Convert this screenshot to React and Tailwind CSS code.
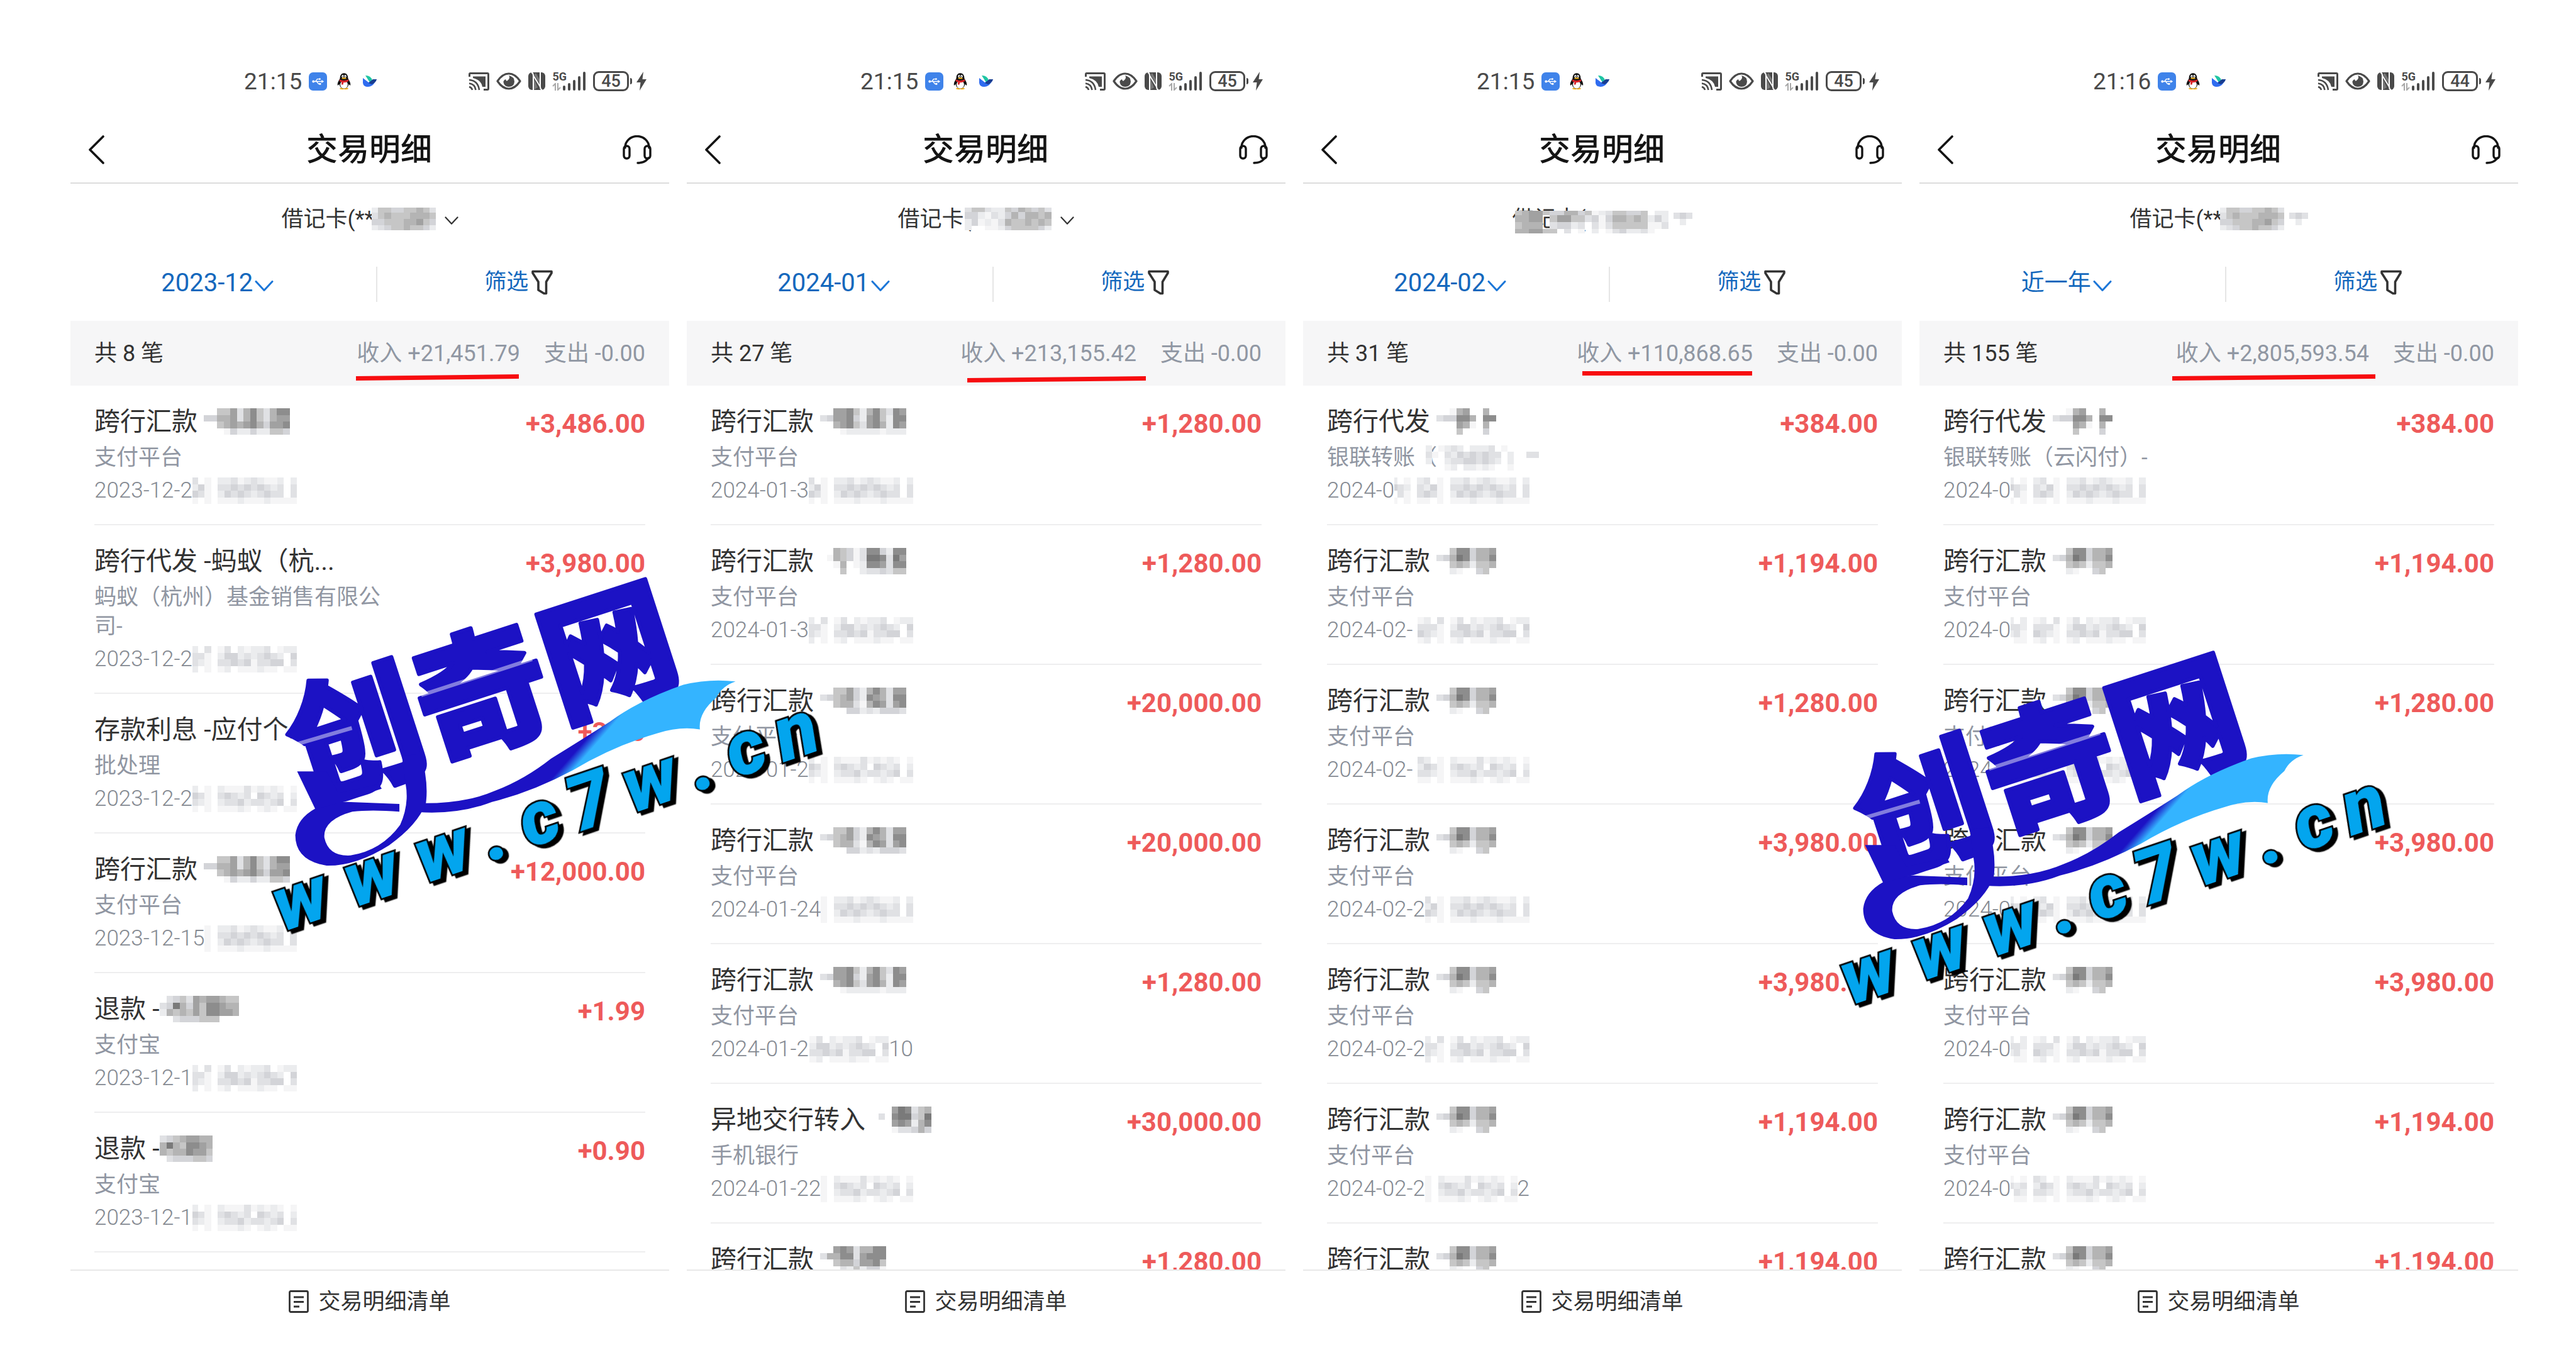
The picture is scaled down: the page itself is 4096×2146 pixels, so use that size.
const SHADES = {
  1: '#f5f5f6',
  2: '#ebecee',
  3: '#e0e1e4',
  4: '#d3d4d8',
  5: '#c6c6c6',
  6: '#b4b4b4',
  7: '#a1a1a1',
  8: '#8d8d8d',
  9: '#7a7a7a',
};

// Each string is one row of mosaic cells, "." is an empty cell
const NAMES = {
  long: ['..55736853688', '4466736853677', '..56767864778', '...1422422554'],
  dense: ['..77852685387', '3477842785288', '..67853786287', '...1222221222'],
  wide: ['..65413884288', '.165413998397', '..16.12887388', '...5..2334355'],
  mid: ['..55742686377', '3456742876388', '..56631687378', '....442324443'],
  short: ['..78736688', '3668837888', '..56647785', '...3252441'],
  pair: ['..5884667', '346984668', '..5652556', '..21..45.'],
  cross: ['..167..6.', '344886.88', '...761.6.', '...5...4.'],
  refund: ['.34537677655', '349647588766', '265657588776', '..3444555...'],
  refundShort: ['34567766', '69658876', '65668775', '.3444554'],
  transfer: ['...798356', '.3.899459', '...787268', '...133464'],
};

const TIMES = [
  ['22.1.23.1.2231232112.2', '3432.3241.3343434323.3', '2.31.3431.2434323433.3', '11.1.11.1.111211121111'],
  ['12.2.12.3.13.21223.122', '2332.3331.2442323432.4', '3231.4321.3343413344.3', '1.11.12.1.12.111211.11'],
  ['11.1.32.1.2111312121.1', '2323.2431.34323.4323.2', '3.32.3321.2334233234.3', '1.11.11.1.11121.121.11'],
];

const CARD = {
  short: ['2554455653', '3565556665', '4455566754', '2345565542'],
  medium: ['3553225465453', '4421324646656', '2412136556565', '2..1124555542'],
  full: ['5677544664512355445.22', '6677.57755341466565242', '5666.34423.31355555113', '667755.3.1.2.1342231..'],
};

const pay = (name, amount, date, tail) => ({ title: '跨行汇款', name, sub: '支付平台', amount, date, tail });

const unionPay = (extra) => ({ title: '跨行代发', name: 'cross', amount: '384.00', date: '2024-0', ...extra });

// Row that only shows its first line above the footer
const peek = (name, amount) => ({ title: '跨行汇款', name, amount });

const SCREENS = [
  {
    time: '21:15',
    battery: 45,
    card: '借记卡(**',
    cardMask: 'short',
    chevron: true,
    range: '2023-12',
    count: 8,
    income: '21,451.79',
    mark: 'right-[239px] bottom-[8px] w-[259px]',
    rows: [
      pay('long', '3,486.00', '2023-12-2'),
      { title: '跨行代发 -蚂蚁（杭...', sub: '蚂蚁（杭州）基金销售有限公司-', amount: '3,980.00', date: '2023-12-2' },
      { title: '存款利息 -应付个...', sub: '批处理', amount: '3.00', date: '2023-12-2' },
      pay('long', '12,000.00', '2023-12-15'),
      { title: '退款 -', name: 'refund', sub: '支付宝', amount: '1.99', date: '2023-12-1' },
      { title: '退款 -', name: 'refundShort', sub: '支付宝', amount: '0.90', date: '2023-12-1' },
    ],
  },
  {
    time: '21:15',
    battery: 45,
    card: '借记卡(',
    cardMask: 'medium',
    chevron: true,
    range: '2024-01',
    count: 27,
    income: '213,155.42',
    mark: 'right-[222px] bottom-[5px] w-[284px]',
    rows: [
      pay('dense', '1,280.00', '2024-01-3'),
      pay('wide', '1,280.00', '2024-01-3'),
      pay('mid', '20,000.00', '2024-01-2'),
      pay('mid', '20,000.00', '2024-01-24'),
      pay('dense', '1,280.00', '2024-01-2', '10'),
      { title: '异地交行转入', name: 'transfer', sub: '手机银行', amount: '30,000.00', date: '2024-01-22' },
      peek('short', '1,280.00'),
    ],
  },
  {
    time: '21:15',
    battery: 45,
    card: '借记卡(',
    cardMask: 'full',
    range: '2024-02',
    count: 31,
    income: '110,868.65',
    mark: 'right-[238px] bottom-[15px] w-[270px]',
    flat: true,
    rows: [
      unionPay({ sub: '银联转账（', subMask: true }),
      pay('pair', '1,194.00', '2024-02-'),
      pay('pair', '1,280.00', '2024-02-'),
      pay('pair', '3,980.00', '2024-02-2'),
      pay('pair', '3,980.00', '2024-02-2'),
      pay('pair', '1,194.00', '2024-02-2', '2'),
      peek('pair', '1,194.00'),
    ],
  },
  {
    time: '21:16',
    battery: 44,
    card: '借记卡(**',
    cardMask: 'short',
    range: '近一年',
    count: 155,
    income: '2,805,593.54',
    mark: 'right-[227px] bottom-[8px] w-[323px]',
    rows: [
      unionPay({ sub: '银联转账（云闪付）-' }),
      pay('pair', '1,194.00', '2024-0'),
      pay('pair', '1,280.00', '2024-0'),
      pay('pair', '3,980.00', '2024-0'),
      pay('pair', '3,980.00', '2024-0'),
      pay('pair', '1,194.00', '2024-0'),
      peek('pair', '1,194.00'),
    ],
  },
];

function Mosaic({ cells, className }) {
  const cols = Math.max(...cells.map((row) => row.length));
  return (
    <svg
      viewBox={`0 0 ${cols} ${cells.length}`}
      preserveAspectRatio="xMaxYMid slice"
      shapeRendering="crispEdges"
      className={className}
      aria-hidden="true"
    >
      {cells.map((row, y) =>
        row.split('').map((c, x) => SHADES[c] && (
          <rect key={`${x}-${y}`} x={x} y={y} width="1" height="1" fill={SHADES[c]} />
        ))
      )}
    </svg>
  );
}

function ChevronDown({ className }) {
  return (
    <svg viewBox="0 0 30 18" fill="none" stroke="currentColor" strokeWidth="3" className={className} aria-hidden="true">
      <path d="M2 1.5 L15 15.5 L28 1.5" strokeLinecap="round" strokeLinejoin="round" />
    </svg>
  );
}

function StatusBar({ time, battery }) {
  return (
    <div className="flex h-[182px] shrink-0 items-center justify-between pt-[76px] pr-[36px] pl-[29%] text-[#4a4a4a]">
      <div className="flex items-center">
        <span className="text-[37px] leading-none">{time}</span>
        {/* USB */}
        <svg viewBox="0 0 30 30" className="ml-[11px] size-[29px]" aria-hidden="true">
          <rect width="30" height="30" rx="7" fill="#3f83ea" />
          <g stroke="#fff" strokeWidth="1.4" fill="none">
            <path d="M7 15 H22 M11 15 L14 11 H17 M13 15 L16 19 H18" />
          </g>
          <circle cx="7.5" cy="15" r="2" fill="#fff" />
          <path d="M21 12.5 L25 15 L21 17.5 Z" fill="#fff" />
          <circle cx="18" cy="11" r="1.5" fill="#fff" />
          <rect x="17" y="17.5" width="3" height="3" fill="#fff" />
        </svg>
        {/* Penguin */}
        <svg viewBox="0 0 24 30" className="ml-[16px] h-[28px] w-[22px]" aria-hidden="true">
          <path d="M4 28 Q8 25 12 28 Q16 25 20 28 Q16 30.500 12 29 Q8 30.500 4 28Z" fill="#f2b21b" />
          <path d="M12 1 C7 1 5 5 5 10 C3 14 0 18 1 22 C2 23 3 21 4 20 C4 25 8 28 12 28 C16 28 20 25 20 20 C21 21 22 23 23 22 C24 18 21 14 19 10 C19 5 17 1 12 1Z" fill="#111" />
          <ellipse cx="12" cy="21" rx="6.500" ry="6.800" fill="#fff" />
          <ellipse cx="9.800" cy="6.500" rx="1.800" ry="2.400" fill="#fff" />
          <ellipse cx="14.200" cy="6.500" rx="1.800" ry="2.400" fill="#fff" />
          <circle cx="10.300" cy="6.800" r="0.800" fill="#111" />
          <circle cx="13.700" cy="6.800" r="0.800" fill="#111" />
          <ellipse cx="12" cy="10" rx="4" ry="1.300" fill="#f2b21b" />
          <path d="M4.500 12 Q12 16 19.500 12 L20 15 Q15 18 11 17.500 L10.500 21 H7.500 L8 16.500 Q5 16 4 15Z" fill="#d8232a" />
        </svg>
        <svg viewBox="0 0 22 18" className="ml-[19px] h-[18px] w-[22px]" aria-hidden="true">
          <path d="M4 0 Q13 0 15 8 L11 11 Z" fill="#1fc5a4" />
          <path d="M0 4 L9 11 L17 6 L22 6 Q21 9 19 11 Q15 18 8 18 Q1 18 0 12Z" fill="#2f6cf0" />
          <path d="M9 12 L16 6 L22 6 Q20 12 14 14Z" fill="#1a3d8f" />
        </svg>
      </div>

      <div className="flex items-center gap-[11px]">
        {/* Cast */}
        <svg viewBox="0 0 33 29" fill="none" stroke="currentColor" className="h-[29px] w-[33px]" aria-hidden="true">
          <path d="M1.500 7 V3 Q1.500 1.500 3 1.500 H30 Q31.500 1.500 31.500 3 V26 Q31.500 27.500 30 27.500 H24" strokeWidth="3" />
          <path d="M7 6.500 H27 V23 H22 Q20 12 7 9Z" fill="currentColor" stroke="none" />
          <path d="M1 12 Q15 13 17 28 M1 17.500 Q10 18.500 11.500 28 M1 23 Q5 24 6 28" strokeWidth="2.600" />
        </svg>
        {/* Eye comfort */}
        <svg viewBox="0 0 40 28" className="h-[28px] w-[40px]" aria-hidden="true">
          <path d="M2 14 Q10 2 20 2 Q30 2 38 14 Q30 26 20 26 Q10 26 2 14Z" fill="none" stroke="currentColor" strokeWidth="3.200" strokeLinejoin="round" />
          <path d="M20 5 Q23 9 18 13 Q16 15 15 11 Q11 13 11.500 16 Q13 23 20 23 Q28 23 29 15 Q29 7 20 5Z" fill="currentColor" />
        </svg>
        {/* NFC */}
        <svg viewBox="0 0 27 28" className="h-[28px] w-[27px]" aria-hidden="true">
          <rect width="27" height="28" rx="6" fill="currentColor" />
          <path d="M8 28 V5 L19 23 V0 M8 5 Q8 1 5 0 M19 23 Q19 27 22 28" fill="none" stroke="#fff" strokeWidth="2" />
          <path d="M9.500 4 L12 1 L19 13 V20Z M8.500 9 V28 L15 24Z" fill="#fff" opacity="0.250" />
        </svg>
        {/* Signal */}
        <div className="flex h-[30px] items-end">
          <div className="flex h-[30px] flex-col items-start justify-between">
            <span className="text-[18px] leading-[16px] font-bold">5G</span>
            <svg viewBox="0 0 14 12" fill="none" stroke="#a8a8a8" strokeWidth="2" className="h-[12px] w-[14px]" aria-hidden="true">
              <path d="M5 12 V1 L1 5 M9 0 V11 L13 7" />
            </svg>
          </div>
          <svg viewBox="0 0 37 30" stroke="currentColor" strokeWidth="4" strokeLinecap="round" className="-ml-[6px] h-[30px] w-[37px]" aria-hidden="true">
            <path d="M2 24 V28 M10 20 V28 M18 15 V28 M26 9 V28 M34 2 V28" />
          </svg>
        </div>
        <div className="flex items-center gap-[2px]">
          <span className="flex h-[32px] w-[57px] items-center justify-center rounded-[9px] border-[3px] border-[#4a4a4a] text-[27px] leading-none font-medium">
            {battery}
          </span>
          <span className="h-[10px] w-[3px] rounded-r bg-[#4a4a4a]" />
        </div>
        <svg viewBox="0 0 16 30" className="-ml-[4px] h-[32px] w-[16px]" fill="currentColor" aria-hidden="true">
          <path d="M11 0 L0 17 H6.500 L5 30 L16 12 H9.500Z" />
        </svg>
      </div>
    </div>
  );
}

function Header() {
  return (
    <header className="flex h-[110px] shrink-0 items-center justify-between border-b-2 border-[#dcdcdc] px-[28px] pt-[4px] text-[#141414]">
      <button type="button" aria-label="返回">
        <svg viewBox="0 0 26 46" fill="none" stroke="currentColor" strokeWidth="3.600" className="h-[46px] w-[44px]" preserveAspectRatio="xMinYMid" aria-hidden="true">
          <path d="M24 2 L3 23 L24 44" strokeLinecap="round" strokeLinejoin="round" />
        </svg>
      </button>
      <h1 className="text-[50px] leading-none font-medium">交易明细</h1>
      <button type="button" aria-label="客服">
        <svg viewBox="0 0 46 46" fill="none" stroke="currentColor" strokeWidth="3.400" strokeLinecap="round" className="size-[46px]" aria-hidden="true">
          <path d="M4 20 V19 A19 17.500 0 0 1 42 19 V20" />
          <rect x="2" y="17" width="9" height="20" rx="4.500" />
          <rect x="35" y="17" width="9" height="20" rx="4.500" />
          <path d="M41 36 Q36 44 24 44" />
        </svg>
      </button>
    </header>
  );
}

function CardPicker({ card, cardMask, chevron }) {
  const cover = {
    short: '-ml-[4px] h-[36px] w-[102px]',
    medium: '-ml-[10px] h-[36px] w-[138px]',
    full: '-ml-[112px] mt-[10px] h-[36px] w-[244px]',
  };
  return (
    <button type="button" className="flex h-[112px] shrink-0 items-center justify-center text-[35px] leading-none text-[#333]">
      <span>{card}</span>
      <Mosaic cells={CARD[cardMask]} className={cover[cardMask]} />
      {chevron ? (
        <ChevronDown className="mt-[6px] ml-[14px] h-[14px] w-[22px]" />
      ) : (
        <Mosaic cells={['343', '.2.']} className="ml-[8px] h-[20px] w-[30px]" />
      )}
    </button>
  );
}

function Filters({ range }) {
  return (
    <div className="flex h-[106px] shrink-0 items-center pb-[10px] text-[#1468bd]">
      <button type="button" className="flex w-[51%] items-center justify-center pr-[18px] pb-[4px]">
        <span className={range === '近一年' ? 'text-[37px] leading-[48px]' : 'text-[40px] leading-[48px]'}>{range}</span>
        <ChevronDown className="mt-[10px] ml-[3px] h-[18px] w-[30px] text-[#1b76d8]" />
      </button>
      <div className="h-[56px] w-[2px] bg-[#e6e6e6]" />
      <button type="button" className="flex flex-1 items-center justify-center pr-[14px] pb-[6px]">
        <span className="text-[35px] leading-[48px]">筛选</span>
        <svg viewBox="0 0 34 40" fill="none" stroke="#333" strokeWidth="3.600" strokeLinejoin="round" className="ml-[5px] h-[40px] w-[34px]" aria-hidden="true">
          <path d="M2 2.500 H32 V5 L23.500 19 V37.500 H20 L11 32 V19 L2 5Z" />
        </svg>
      </button>
    </div>
  );
}

function Summary({ count, income, mark, flat }) {
  return (
    <div className="relative flex h-[103px] shrink-0 items-center justify-between bg-[#f6f6f7] px-[38px] text-[36px] leading-none">
      <span className="text-[#333]">共 {count} 笔</span>
      <div className="flex gap-[38px] text-[#9097a3]">
        <span>收入 +{income}</span>
        <span>支出 -0.00</span>
      </div>
      <svg viewBox="0 0 100 10" preserveAspectRatio="none" className={`absolute h-[10px] ${mark}`} aria-hidden="true">
        <path d={flat ? 'M0 2 H100 V9 H0Z' : 'M0 3 L100 0 V7 L0 10Z'} fill="#f70d10" />
      </svg>
    </div>
  );
}

function Row({ row, index }) {
  return (
    <li className="mx-[38px] flex justify-between border-b-2 border-[#eeeeef] pt-[28px] pb-[30px]">
      <div className="flex w-[470px] flex-col gap-[6px]">
        <div className="flex items-center text-[41px] leading-[58px] text-[#333]">
          <span>{row.title}</span>
          {row.name && (
            <Mosaic
              cells={NAMES[row.name]}
              className={row.title.endsWith('-') ? 'h-[42px]' : 'ml-[10px] h-[42px]'}
            />
          )}
        </div>
        {row.sub && (
          <div className="flex items-center text-[35px] leading-[46px] text-[#9096a2]">
            <span>{row.sub}</span>
            {row.subMask && (
              <Mosaic
                cells={['2.1232.2223.1.....', '31.324343433.2..33', '2..233443432.2....', '...12.22121..1....']}
                className="-ml-[18px] h-[40px]"
              />
            )}
          </div>
        )}
        {row.date && (
          <div className="flex w-[322px] items-center text-[35px] leading-[46px] font-light text-[#858a92]">
            <span>{row.date}</span>
            <Mosaic cells={TIMES[index % 3]} className="h-[42px] min-w-0 flex-1" />
            <span>{row.tail}</span>
          </div>
        )}
      </div>
      <span className="mt-[4px] text-[42px] leading-[58px] font-bold text-[#ee5a5a]">+{row.amount}</span>
    </li>
  );
}

function Screen({ screen }) {
  return (
    <section className="flex min-h-0 min-w-0 flex-col bg-white">
      <StatusBar time={screen.time} battery={screen.battery} />
      <Header />
      <CardPicker card={screen.card} cardMask={screen.cardMask} chevron={screen.chevron} />
      <Filters range={screen.range} />
      <Summary count={screen.count} income={screen.income} mark={screen.mark} flat={screen.flat} />
      <ul className="min-h-0 flex-1 overflow-hidden">
        {screen.rows.map((row, i) => (
          <Row key={i} row={row} index={i} />
        ))}
      </ul>
      <footer className="flex h-[100px] shrink-0 items-center justify-center border-t-2 border-[#e8e8e8]">
        <button type="button" className="flex items-center gap-[15px] text-[35px] leading-none text-[#333]">
          <svg viewBox="0 0 32 36" fill="none" stroke="currentColor" strokeWidth="2.800" className="h-[36px] w-[32px]" aria-hidden="true">
            <rect x="1.500" y="1.500" width="29" height="33" rx="2" />
            <path d="M8 11 H24 M8 18.500 H24 M8 26 H17" />
          </svg>
          交易明细清单
        </button>
      </footer>
    </section>
  );
}

// Distance of each character's centre along the slanted baseline
const SITE = [
  ['w', 0],
  ['w', 136],
  ['w', 271],
  ['.', 368],
  ['c', 455],
  ['7', 551],
  ['w', 666],
  ['.', 761],
  ['c', 848],
  ['n', 944],
];

function Watermark({ className, id }) {
  return (
    <svg viewBox="0 0 1040 720" className={`pointer-events-none absolute h-[635px] w-[917px] ${className}`}>
      <defs>
        <linearGradient id={id} gradientUnits="userSpaceOnUse" x1="866" y1="756" x2="894" y2="773">
          <stop offset="0" stopColor="#1c12c4" />
          <stop offset="1" stopColor="#34b4ff" />
        </linearGradient>
      </defs>
      <g transform="translate(400 250) rotate(-18)">
        <text
          y="87"
          textAnchor="middle"
          fill="#1c12c4"
          stroke="#1c12c4"
          strokeWidth="7"
          strokeLinejoin="round"
          className="font-['Noto_Sans_CJK_SC',sans-serif] text-[240px] font-black"
        >
          创奇网
        </text>
      </g>
      <g transform="scale(0.6633 0.4592)">
        {/* Loop and swoosh */}
        <path
          fill="#1c12c4"
          d="M385 790 L436 780 Q458 890 450 975 Q428 1060 350 1140 Q260 1222 180 1220 Q95 1200 95 1100 Q100 1035 150 995 Q185 968 235 970 L378 978 V1008 Q300 1000 250 1008 Q170 1040 174 1110 Q185 1185 245 1180 Q330 1160 380 1060 Q405 980 395 900Z"
        />
        <path fill="#1c12c4" d="M100 850 L180 850 L212 935 L322 900 L330 918 L215 972 L150 1000Z" />
        <path
          fill={`url(#${id})`}
          d="M448 975 Q560 975 640 925 Q720 880 790 800 Q880 720 950 655 Q1030 570 1150 510 Q1220 485 1292 497 Q1255 515 1240 560 Q1190 620 1195 685 Q1140 672 1080 700 Q960 750 850 845 Q740 930 630 970 Q540 1020 430 1010Z"
        />
      </g>
      <g stroke="#fff" strokeWidth="7" opacity="0.450">
        <path d="M290 253 L490 188 M56 344 L165 312" />
      </g>
      <g
        transform="translate(74 630) rotate(-18.7)"
        textAnchor="middle"
        fill="#03a5ee"
        stroke="#000"
        strokeWidth="6"
        paintOrder="stroke"
        className="font-['Roboto',sans-serif] text-[138px] font-black italic drop-shadow-[6px_6px_0_#000]"
      >
        {SITE.map(([char, x]) => (
          <text key={x} x={x} y="36">{char}</text>
        ))}
      </g>
    </svg>
  );
}

export default function App() {
  return (
    <main className="relative h-screen w-full overflow-hidden bg-white font-['Roboto','Noto_Sans_CJK_SC',sans-serif]">
      <div className="grid h-full grid-cols-4 gap-[28px] pr-[92px] pb-[28px] pl-[112px]">
        {SCREENS.map((screen) => (
          <Screen key={screen.range} screen={screen} />
        ))}
      </div>
      <Watermark id="swoosh-left" className="top-[882px] left-[414px]" />
      <Watermark id="swoosh-right" className="top-[999px] left-[2907px]" />
    </main>
  );
}
